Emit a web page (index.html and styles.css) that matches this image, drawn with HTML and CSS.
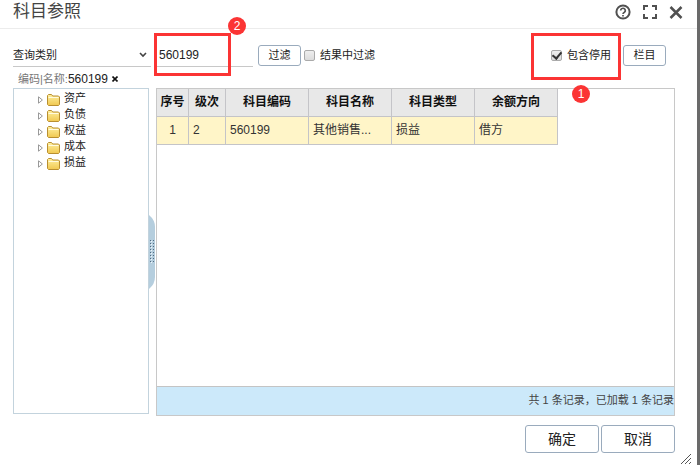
FILE: index.html
```html
<!DOCTYPE html>
<html lang="zh-CN">
<head>
    <meta charset="UTF-8">
    <meta name="viewport" content="width=device-width, initial-scale=1.0">
    <title>科目参照</title>
    <link rel="stylesheet" href="styles.css">
</head>
<body>
    <div class="dialog">
        <header class="dialog-header">
            <h1>科目参照</h1>
            <div class="window-tools">
                <button type="button" class="icon-button" aria-label="帮助">
                    <svg width="16" height="16" viewBox="0 0 16 16" fill="none" stroke="#505050" stroke-width="2">
                        <circle cx="8" cy="8" r="6.6"/>
                        <path d="M5.7 6.5a2.3 2.2 0 1 1 3.7 1.7Q8 9 8 10" stroke-width="1.7"/>
                        <path d="M8 10.9v1.6" stroke-width="1.7"/>
                    </svg>
                </button>
                <button type="button" class="icon-button" aria-label="最大化">
                    <svg width="14" height="16" viewBox="0 0 14 16" fill="none" stroke="#505050" stroke-width="2">
                        <path d="M5 2H1V6M9 2h4V6M1 10v4H5M13 10v4H9"/>
                    </svg>
                </button>
                <button type="button" class="icon-button" aria-label="关闭">
                    <svg width="14" height="16" viewBox="0 0 14 16" fill="none" stroke="#505050" stroke-width="2.5">
                        <path d="M1.5 3l11 11M12.5 3l-11 11"/>
                    </svg>
                </button>
            </div>
        </header>

        <form class="toolbar">
            <div class="category">
                <select id="category" aria-label="查询类别">
                    <option>查询类别</option>
                </select>
                <svg class="chevron" width="8" height="6" viewBox="0 0 8 6" fill="none" stroke="#444" stroke-width="1.6"><path d="M1 1l3 3 3-3"/></svg>
            </div>
            <div class="keyword">
                <input type="text" id="keyword" aria-label="关键字" value="560199">
                <div class="mark mark-keyword"><span class="mark-number">2</span></div>
            </div>
            <button type="button" class="btn btn-small">过滤</button>
            <label class="check" for="inResult"><input type="checkbox" id="inResult">结果中过滤</label>
            <div class="toolbar-right">
                <div class="include">
                    <label class="check" for="includeStopped"><input type="checkbox" id="includeStopped" checked>包含停用</label>
                    <div class="mark mark-include"><span class="mark-number">1</span></div>
                </div>
                <button type="button" class="btn btn-small">栏目</button>
            </div>
        </form>

        <div class="filter-tag">
            <span class="tag-name">编码|名称:</span><span class="tag-value">560199</span>
            <button type="button" class="tag-remove" aria-label="删除条件">
                <svg width="6" height="6" viewBox="0 0 6 6" stroke="#111" stroke-width="1.6"><path d="M.5.5l5 5M5.5.5l-5 5"/></svg>
            </button>
        </div>

        <svg class="defs" width="0" height="0" aria-hidden="true">
            <defs>
                <linearGradient id="folderFill" x1="0" y1="0" x2="0" y2="1">
                    <stop offset="0" stop-color="#fff0a0"/>
                    <stop offset="1" stop-color="#f0c850"/>
                </linearGradient>
                <symbol id="arrow" viewBox="0 0 5 8"><path d="M.5.8v6.4L4.4 4z" fill="#fff" stroke="#999"/></symbol>
                <symbol id="folder" viewBox="0 0 13 12">
                    <path d="M.5 10.5v-9l1-1h3l1.2 1.5h5.8l1 1v7.5l-1 1h-10z" fill="url(#folderFill)" stroke="#b98f30"/>
                    <path d="M1.5 3.5h10" stroke="#fffbe0"/>
                </symbol>
            </defs>
        </svg>

        <main class="panels">
            <aside class="tree-panel">
                <ul class="tree">
                    <li><svg width="5" height="8"><use href="#arrow"/></svg><svg width="13" height="12"><use href="#folder"/></svg>资产</li>
                    <li><svg width="5" height="8"><use href="#arrow"/></svg><svg width="13" height="12"><use href="#folder"/></svg>负债</li>
                    <li><svg width="5" height="8"><use href="#arrow"/></svg><svg width="13" height="12"><use href="#folder"/></svg>权益</li>
                    <li><svg width="5" height="8"><use href="#arrow"/></svg><svg width="13" height="12"><use href="#folder"/></svg>成本</li>
                    <li><svg width="5" height="8"><use href="#arrow"/></svg><svg width="13" height="12"><use href="#folder"/></svg>损益</li>
                </ul>
            </aside>
            <div class="splitter">
                <svg width="6" height="74" viewBox="0 0 6 74">
                    <path d="M0 0Q6 5 6 12v50Q6 69 0 74z" fill="#b5cede"/>
                    <path d="M1.5 25v24M4.5 25v24" stroke="#526b80" stroke-dasharray="1 2"/>
                    <path d="M2.5 26v24" stroke="#f2f8fc" stroke-dasharray="1 2"/>
                </svg>
            </div>
            <section class="grid-panel">
                <div class="grid-body">
                    <table>
                        <colgroup>
                            <col class="col-index"><col class="col-level"><col><col><col><col>
                        </colgroup>
                        <thead>
                            <tr>
                                <th>序号</th>
                                <th>级次</th>
                                <th>科目编码</th>
                                <th>科目名称</th>
                                <th>科目类型</th>
                                <th>余额方向</th>
                            </tr>
                        </thead>
                        <tbody>
                            <tr>
                                <td class="index">1</td>
                                <td>2</td>
                                <td>560199</td>
                                <td>其他销售...</td>
                                <td>损益</td>
                                <td>借方</td>
                            </tr>
                        </tbody>
                    </table>
                </div>
                <div class="grid-footer">共 1 条记录，已加载 1 条记录</div>
            </section>
        </main>

        <footer class="dialog-footer">
            <button type="button" class="btn btn-large">确定</button>
            <button type="button" class="btn btn-large">取消</button>
        </footer>
        <svg class="resize" width="12" height="12" viewBox="0 0 12 12" stroke="#555"><path d="M1 11L11 1M5 11l6-6M9 11l2-2"/></svg>
    </div>
</body>
</html>
```
FILE: styles.css
```css
* {
    box-sizing: border-box;
}
body {
    margin: 0;
    font-family: "Liberation Sans", "Noto Sans CJK SC", sans-serif;
    font-size: 11px;
    line-height: 16px;
    color: #222;
    background-color: #fff;
}
button, input, select {
    font: inherit;
    color: inherit;
    margin: 0;
}
.dialog {
    position: relative;
    display: flex;
    flex-direction: column;
    min-height: 100vh;
    border-right: 3px solid #6a6a6a;
}
.dialog-header {
    display: flex;
    justify-content: space-between;
    align-items: center;
    height: 29px;
    padding: 0 14px 4px 13px;
    border-bottom: 1px solid #ececec;
}
h1 {
    margin: 0;
    font-size: 17px;
    line-height: 26px;
    font-weight: normal;
    color: #444;
}
.window-tools {
    display: flex;
    align-items: center;
    gap: 12px;
}
.icon-button {
    display: flex;
    padding: 0;
    border: none;
    background: none;
}

/* query bar */
.toolbar {
    display: flex;
    align-items: center;
    height: 24px;
    margin: 14px 31px 0 13px;
}
.category, .keyword, .include {
    position: relative;
}
.category {
    width: 138px;
    margin-right: 5px;
}
.keyword {
    width: 97px;
    margin-right: 5px;
}
.category select, .keyword input {
    display: block;
    width: 100%;
    height: 24px;
    padding: 0;
    border: none;
    border-bottom: 1px solid #c8c8c8;
    border-radius: 0;
    background: none;
    appearance: none;
    outline: none;
}
.keyword input {
    padding-left: 3px;
    font-size: 12px;
}
.chevron {
    position: absolute;
    right: 4px;
    top: 9px;
    pointer-events: none;
}
.btn {
    padding: 0;
    border: 1px solid #9aabbd;
    border-radius: 3px;
    background-color: #fff;
    text-align: center;
}
.btn-small {
    width: 43px;
    height: 21px;
    line-height: 18px;
}
.btn-large {
    width: 74px;
    height: 28px;
    font-size: 14px;
    line-height: 24px;
}
.check {
    display: flex;
    align-items: center;
    gap: 5px;
}
.toolbar > .check {
    margin-left: 3px;
}
.check input {
    display: flex;
    align-items: center;
    justify-content: center;
    width: 11px;
    height: 11px;
    border: 1px solid #aaa;
    border-radius: 2px;
    background: linear-gradient(#eee, #dcdcdc);
    appearance: none;
}
.check input:checked::after {
    content: "";
    width: 4px;
    height: 7px;
    margin-bottom: 2px;
    border: solid #333;
    border-width: 0 2px 2px 0;
    transform: rotate(40deg);
}
.toolbar-right {
    display: flex;
    align-items: center;
    gap: 12px;
    margin-left: auto;
}

/* numbered red frames over the controls */
.mark {
    position: absolute;
    border: 3px solid #fb3434;
    pointer-events: none;
}
.mark-keyword {
    left: -2px;
    top: -10px;
    width: 77px;
    height: 43px;
}
.mark-include {
    left: -20px;
    right: -10px;
    top: -14px;
    height: 47px;
}
.mark-number {
    position: absolute;
    width: 18px;
    height: 18px;
    border-radius: 50%;
    background-color: #fb3434;
    color: #fff;
    font-size: 12px;
    line-height: 18px;
    text-align: center;
}
.mark-keyword .mark-number {
    right: -18px;
    top: -19px;
}
.mark-include .mark-number {
    left: 38px;
    top: 49px;
}

.filter-tag {
    display: flex;
    align-items: center;
    height: 16px;
    margin: 4px 0 1px 18px;
}
.tag-name {
    color: #777;
}
.tag-value {
    font-size: 12px;
}
.tag-remove {
    display: flex;
    margin-left: 4px;
    padding: 0;
    border: none;
    background: none;
}
.defs {
    position: absolute;
}

/* tree and grid */
.panels {
    flex: 1;
    display: flex;
    margin: 0 22px 0 13px;
}
.tree-panel {
    width: 136px;
    margin-bottom: 2px;
    border: 1px solid #c3d3dd;
}
.tree {
    margin: 1px 0 0;
    padding: 0 0 0 24px;
    list-style: none;
}
.tree li {
    display: flex;
    align-items: center;
    height: 16px;
}
.tree li svg {
    margin-top: 3px;
    margin-right: 4px;
}
.splitter {
    display: flex;
    align-items: center;
    width: 7px;
}
.grid-panel {
    flex: 1;
    display: flex;
    flex-direction: column;
    min-width: 0;
    border: 1px solid #c8c8c8;
}
.grid-body {
    flex: 1;
}
table {
    width: 401px;
    table-layout: fixed;
    border-collapse: separate;
    border-spacing: 0;
    font-size: 12px;
    color: #333;
}
.col-index {
    width: 32px;
}
.col-level {
    width: 37px;
}
th, td {
    height: 28px;
    padding: 0 4px 2px;
    border-right: 1px solid #c4c4c8;
    border-bottom: 1px solid #c4c4c8;
    text-align: left;
    white-space: nowrap;
}
th {
    padding: 0 0 2px;
    background-color: #e8e8e8;
    color: #111;
    text-align: center;
}
td {
    background-color: #fff5c8;
}
td.index {
    text-align: center;
}
.grid-footer {
    height: 29px;
    padding-top: 5px;
    border-top: 1px solid #c4c4c4;
    background-color: #cce9fa;
    color: #444;
    text-align: right;
    white-space: nowrap;
}
.dialog-footer {
    display: flex;
    justify-content: flex-end;
    gap: 2px;
    padding: 9px 22px 12px;
}
.resize {
    position: absolute;
    right: 5px;
    bottom: 0;
}
```
